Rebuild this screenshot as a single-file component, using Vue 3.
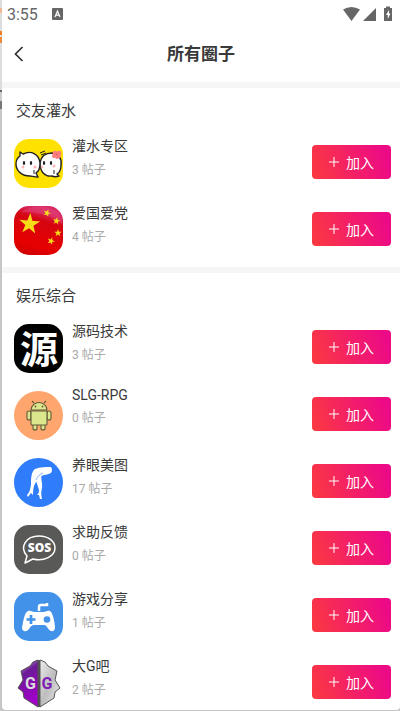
<template>
  <div class="screen">
    <div class="behind"></div>
    <div class="page">
      <div class="status-bar">
        <span class="clock">3:55</span>
        <svg class="app-badge" width="11" height="12" viewBox="0 0 11 12">
          <rect width="11" height="12" rx="1" fill="#666" />
          <path d="M3 9 L5.500 3 L8 9 M4 7.200 H7" fill="none" stroke="#fff" stroke-width="1.200" />
        </svg>
        <svg class="signals" width="52" height="16" viewBox="0 0 52 16">
          <path d="M1 3.500 Q9.500 -1.500 18 3.500 L9.500 15 Z" fill="#666" />
          <path d="M21 15 L34 2 V15 Z" fill="#666" />
          <path d="M42 2 H44 V0.500 H48 V2 H50 V15 H42 Z" fill="#666" />
          <path d="M47 4 L44 9 H45.800 V13 L48.500 7.500 H47 Z" fill="#fff" />
        </svg>
      </div>

      <header class="nav">
        <button class="back" aria-label="返回">
          <svg width="10" height="16" viewBox="0 0 10 16">
            <path d="M8.500 1 L1.500 8 L8.500 15" fill="none" stroke="#333" stroke-width="1.700" />
          </svg>
        </button>
        <h1>所有圈子</h1>
      </header>

      <section v-for="group in groups" :key="group.name" class="group">
        <h2>{{ group.name }}</h2>
        <ul>
          <li v-for="item in group.items" :key="item.name" class="row">
            <svg class="icon" viewBox="0 0 49 49">
              <!-- Two white blobs -->
              <g v-if="item.icon === 'blobs'">
                <rect width="49" height="49" rx="15" fill="#ffe100" />
                <g fill="#fff" stroke="#222" stroke-width="1.400" stroke-linejoin="round">
                  <path d="M26 24 C27 17 32 14 38 14 C45 15 48 20 47 26 C47 31 45 34 43 35 L45 37 C42 38 40 38 38 37 C31 38 26 33 26 24 Z" />
                  <path d="M6 17 L6 13 L9 15 C17 11 25 15 26 24 C26 29 24 33 22 34 L24 38 C20 38 18 37 16 37 C8 37 2 32 2 25 C2 22 3 19 6 17 Z" />
                </g>
                <path d="M26 14 L31 12 M27 16 L32 14 M20 31 L20 35 M40 31 L40 35" stroke="#222" />
                <g fill="#222">
                  <ellipse cx="10" cy="24" rx="1.200" ry="2" />
                  <ellipse cx="17" cy="24" rx="1.200" ry="2" />
                  <ellipse cx="30" cy="24" rx="1.200" ry="2" />
                  <ellipse cx="37" cy="24" rx="1.200" ry="2" />
                </g>
                <g fill="#ffb5b5">
                  <circle cx="9" cy="28" r="1.500" />
                  <circle cx="21" cy="28" r="1.500" />
                  <circle cx="28" cy="28" r="1.300" />
                  <circle cx="40" cy="27" r="1.500" />
                </g>
                <g fill="#ff7d7d">
                  <circle cx="41" cy="14" r="2.300" />
                  <circle cx="45" cy="14" r="2.300" />
                  <circle cx="40" cy="17" r="2" />
                  <circle cx="43" cy="18" r="2" />
                  <circle cx="45" cy="17" r="2" />
                </g>
              </g>

              <!-- Flag -->
              <g v-else-if="item.icon === 'flag'">
                <defs>
                  <linearGradient id="flag" x1="0" y1="1" x2="0.300" y2="0">
                    <stop offset="0" stop-color="#c80000" />
                    <stop offset="0.300" stop-color="#e60000" />
                    <stop offset="0.800" stop-color="#d50510" />
                    <stop offset="1" stop-color="#d92860" />
                  </linearGradient>
                </defs>
                <rect width="49" height="49" rx="15" fill="url(#flag)" />
                <path d="M7 6 Q24 -5 43 5 Q49 11 48 18 Q35 6 7 6 Z" fill="#e2427a" opacity="0.550" />
                <path
                  v-for="star in stars"
                  :key="star.x"
                  :transform="`translate(${star.x} ${star.y}) rotate(${star.turn}) scale(${star.size})`"
                  d="M0 -10 L2.300 -3.100 L9.500 -3.100 L3.700 1.200 L5.900 8.100 L0 3.900 L-5.900 8.100 L-3.700 1.200 L-9.500 -3.100 L-2.300 -3.100 Z"
                  fill="#f7dc18"
                />
              </g>

              <!-- Source code -->
              <g v-else-if="item.icon === 'source'">
                <rect width="49" height="49" rx="15" fill="#000" />
                <text x="25" y="39" class="glyph" font-size="38" text-anchor="middle" fill="#fff">源</text>
              </g>

              <!-- Robot -->
              <g v-else-if="item.icon === 'robot'">
                <circle cx="24.500" cy="24.500" r="24.500" fill="#ffa66f" />
                <g fill="#dce68c" stroke="#635b3a" stroke-width="1.100">
                  <path d="M19 32 H23 V38 Q21 40 19 38 Z M27 32 H31 V38 Q29 40 27 38 Z" />
                  <rect x="13" y="20" width="4" height="9" rx="2" />
                  <rect x="33" y="20" width="4" height="9" rx="2" />
                  <path d="M17 20 H33 V33 Q33 34 32 34 H18 Q17 34 17 33 Z" />
                  <path d="M17 19 C18 9 32 9 33 19 Z" />
                  <path d="M20 12 L18 10 M30 12 L32 10" />
                </g>
                <circle cx="21.500" cy="15.500" r="0.900" fill="#635b3a" />
                <circle cx="28.500" cy="15.500" r="0.900" fill="#635b3a" />
              </g>

              <!-- Legs -->
              <g v-else-if="item.icon === 'legs'">
                <circle cx="24.500" cy="24.500" r="24.500" fill="#2f7dfa" />
                <path d="M21 11 C26 9 32 9 37 9 Q39 12 37 15 C33 17 28 17 25 19 C24 22 21 25 20 28 C19 32 19 34 19 37 L17 35 L14 39 L13 37 C16 34 16 31 17 27 C17 21 17 14 21 11 Z" fill="#fff" />
                <path d="M21 16 L28 16 C26 20 29 25 28 30 C27 34 27 36 28 41 L26 41 L25 37 L23 37 C26 34 25 32 24 29 C23 25 21 21 21 16 Z" fill="#fff" />
                <path d="M29 15 C26 16 24 18 22 22" fill="none" stroke="#2f7dfa" stroke-width="0.600" />
              </g>

              <!-- SOS bubble -->
              <g v-else-if="item.icon === 'sos'">
                <rect width="49" height="49" rx="15" fill="#595957" />
                <path d="M11 38 L13 31 C5 22 12 11 25 11 C34 11 41 16 41 23 C41 31 30 37 19 34 C16 35 14 37 11 38 Z" fill="none" stroke="#fff" stroke-width="1.500" stroke-linejoin="round" />
                <text x="25.500" y="27" class="sos" font-size="12" text-anchor="middle" fill="#fff">SOS</text>
              </g>

              <!-- Gamepad -->
              <g v-else-if="item.icon === 'gamepad'">
                <rect width="49" height="49" rx="15" fill="#4292ea" />
                <path d="M25 19 V15 Q25 13 27 13 H33 V11" fill="none" stroke="#fff" stroke-width="2.500" />
                <path d="M14 19 C17 18 18 20 21 20 H29 C32 20 33 18 36 19 C39 21 41 31 41 36 C40 41 36 40 33 35 C32 33 30 33 29 33 H20 C18 33 17 34 15 37 C12 41 8 39 8 36 C9 31 10 21 14 19 Z" fill="#fff" />
                <path d="M17 23 V32 M12.500 27.500 H21.500" stroke="#4292ea" stroke-width="2.700" />
                <circle cx="33" cy="27.500" r="3.300" fill="#4292ea" />
              </g>

              <!-- Split shield -->
              <g v-else>
                <defs>
                  <linearGradient id="purple" x1="0" y1="0" x2="0.300" y2="1">
                    <stop offset="0" stop-color="#d9bfe6" />
                    <stop offset="0.350" stop-color="#6b1b96" />
                    <stop offset="1" stop-color="#a000c8" />
                  </linearGradient>
                  <linearGradient id="silver" x1="0" y1="0" x2="1" y2="1">
                    <stop offset="0" stop-color="#ededed" />
                    <stop offset="0.500" stop-color="#bdbdbd" />
                    <stop offset="1" stop-color="#eee" />
                  </linearGradient>
                </defs>
                <path d="M24 1 L19 3 L16 7 L7 12 L9 21 L4 29 L9 33 L10 39 L24 48 Z" fill="url(#purple)" stroke="#555" stroke-linejoin="round" />
                <path d="M26 1 L31 3 L34 7 L43 12 L41 21 L46 29 L41 33 L40 39 L26 48 Z" fill="url(#silver)" stroke="#555" stroke-linejoin="round" />
                <path d="M25 1 V48" stroke="#333" stroke-width="1.500" />
                <text x="16.500" y="30" class="glyph" font-size="16" text-anchor="middle" fill="#ddd">G</text>
                <text x="33" y="30" class="glyph" font-size="16" text-anchor="middle" fill="#7d20b5">G</text>
              </g>
            </svg>

            <div class="info">
              <h3>{{ item.name }}</h3>
              <p>{{ item.posts }} 帖子</p>
            </div>

            <button class="join">
              <svg width="10" height="10" viewBox="0 0 10 10">
                <path d="M5 0 V10 M0 5 H10" stroke="#fff" />
              </svg>
              加入
            </button>
          </li>
        </ul>
      </section>
    </div>
  </div>
</template>

<script setup>
const groups = [
  {
    name: '交友灌水',
    items: [
      { name: '灌水专区', posts: 3, icon: 'blobs' },
      { name: '爱国爱党', posts: 4, icon: 'flag' }
    ]
  },
  {
    name: '娱乐综合',
    items: [
      { name: '源码技术', posts: 3, icon: 'source' },
      { name: 'SLG-RPG', posts: 0, icon: 'robot' },
      { name: '养眼美图', posts: 17, icon: 'legs' },
      { name: '求助反馈', posts: 0, icon: 'sos' },
      { name: '游戏分享', posts: 1, icon: 'gamepad' },
      { name: '大G吧', posts: 2, icon: 'shield' }
    ]
  }
]

const stars = [
  { x: 15.5, y: 18, turn: 5, size: 1.1 },
  { x: 33, y: 7, turn: 20, size: 0.4 },
  { x: 42.5, y: 15, turn: 10, size: 0.4 },
  { x: 44, y: 27, turn: 0, size: 0.4 },
  { x: 37, y: 35, turn: 20, size: 0.4 }
]
</script>

<style>
body {
  margin: 0;
  background: #c6c6c6;
}
</style>

<style scoped>
.screen {
  display: flex;
  height: 100vh;
  overflow: hidden;
  font-family: Roboto, "Noto Sans CJK SC", sans-serif;
  color: #3a3a3a;
}

/* Sliver of the page underneath */
.behind {
  width: 2px;
  background: linear-gradient(
    #ddd 8px, #f0b890 8px, #f0b890 13px, #ddd 13px, #ddd 31px,
    #ee7d22 31px, #ee7d22 35px, #ddd 35px, #ddd 37px, #ee8a3a 37px,
    #ee8a3a 43px, #ddd 43px, #ddd 90px, #666 90px, #666 92px,
    #ccc 92px, #ccc 101px, #777 101px, #777 109px, #c6c6c6 109px
  );
}

.page {
  flex: 1;
  min-width: 0;
  margin-bottom: 1px;
  overflow: hidden;
  background: #fff;
  border-radius: 0 0 4px 4px;
}

.status-bar {
  display: flex;
  align-items: center;
  height: 28px;
  padding: 0 6px 0 5px;
}

.clock {
  font-size: 16px;
  color: #666;
}

.app-badge {
  margin-left: 14px;
}

.signals {
  margin-left: auto;
}

.nav {
  display: grid;
  grid-template-columns: 40px 1fr 40px;
  align-items: center;
  height: 52px;
  padding-bottom: 2px;
}

.back {
  display: flex;
  padding: 0 0 0 12px;
  border: none;
  background: none;
  cursor: pointer;
}

h1 {
  margin: 0;
  font-size: 17px;
  line-height: 24px;
  font-weight: 700;
  text-align: center;
}

.group {
  padding-bottom: 5px;
  border-top: 6px solid #f6f6f6;
}

h2 {
  margin: 0;
  padding: 12px 14px 6px;
  font-size: 15px;
  line-height: 22px;
  font-weight: 400;
}

ul {
  margin: 0;
  padding: 0;
  list-style: none;
}

.row {
  display: flex;
  align-items: flex-start;
  height: 67px;
  padding: 0 9px 0 12px;
}

.icon {
  width: 49px;
  height: 49px;
  margin-top: 11px;
}

.info {
  flex: 1;
  padding: 7px 0 0 9px;
}

h3 {
  margin: 0;
  font-size: 14px;
  font-weight: 400;
}

p {
  margin: 5px 0 0;
  font-size: 12px;
  color: #aaa;
}

.join {
  display: flex;
  align-items: center;
  justify-content: center;
  gap: 7px;
  width: 79px;
  height: 34px;
  margin-top: 17px;
  padding: 0;
  border: none;
  border-radius: 4px;
  background: linear-gradient(70deg, #fb3a3f, #ed0a86 90%);
  color: #fff;
  font-family: inherit;
  font-size: 14px;
  cursor: pointer;
}

.glyph {
  font-weight: 700;
}

.sos {
  font-family: "Open Sans", sans-serif;
  font-weight: 800;
}
</style>
